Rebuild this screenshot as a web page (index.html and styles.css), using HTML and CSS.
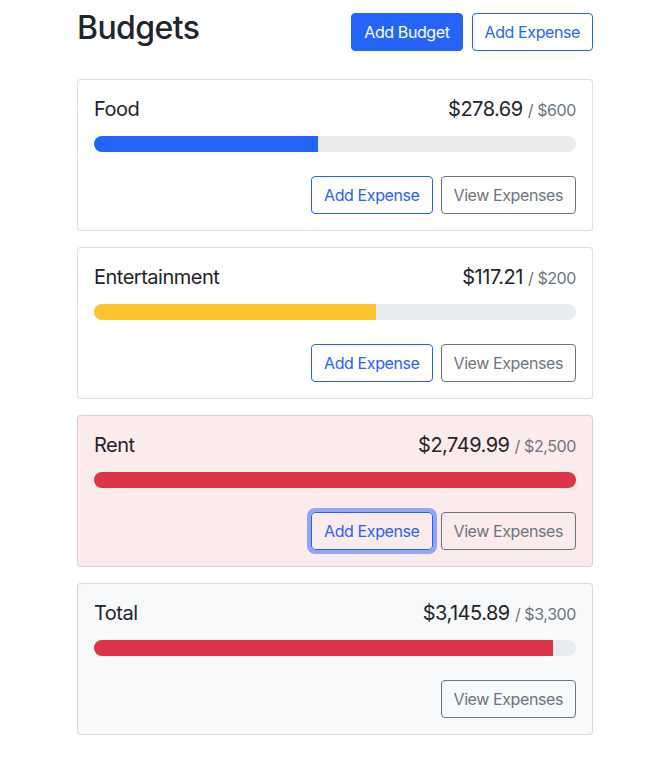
FILE: index.html
```html
<!DOCTYPE html>
<html lang="en">
<head>
<meta charset="utf-8">
<title>Budgets</title>
<link rel="stylesheet" href="styles.css">
</head>
<body>
<div class="container">
  <div class="header">
    <h1 class="page-title">Budgets</h1>
    <button class="btn btn-primary">Add Budget</button>
    <button class="btn btn-outline-primary">Add Expense</button>
  </div>
  <div class="cards">
    <div class="card">
      <div class="card-title">
        <div>Food</div>
        <div class="amount">$278.69 <span class="max">/ $600</span></div>
      </div>
      <div class="progress"><div class="bar bar-primary" style="width:46.45%"></div></div>
      <div class="actions">
        <button class="btn btn-outline-primary">Add Expense</button>
        <button class="btn btn-outline-secondary">View Expenses</button>
      </div>
    </div>
    <div class="card">
      <div class="card-title">
        <div>Entertainment</div>
        <div class="amount">$117.21 <span class="max">/ $200</span></div>
      </div>
      <div class="progress"><div class="bar bar-warning" style="width:58.6%"></div></div>
      <div class="actions">
        <button class="btn btn-outline-primary">Add Expense</button>
        <button class="btn btn-outline-secondary">View Expenses</button>
      </div>
    </div>
    <div class="card card-danger">
      <div class="card-title">
        <div>Rent</div>
        <div class="amount">$2,749.99 <span class="max">/ $2,500</span></div>
      </div>
      <div class="progress"><div class="bar bar-danger" style="width:100%"></div></div>
      <div class="actions">
        <button class="btn btn-outline-primary focused">Add Expense</button>
        <button class="btn btn-outline-secondary">View Expenses</button>
      </div>
    </div>
    <div class="card card-light">
      <div class="card-title">
        <div>Total</div>
        <div class="amount">$3,145.89 <span class="max">/ $3,300</span></div>
      </div>
      <div class="progress"><div class="bar bar-danger" style="width:95.33%"></div></div>
      <div class="actions">
        <button class="btn btn-outline-secondary">View Expenses</button>
      </div>
    </div>
  </div>
</div>
</body>
</html>
```

FILE: styles.css
```css
* { box-sizing: border-box; }
body {
  margin: 0;
  font-family: Inter, "Noto Sans", "Liberation Sans", sans-serif;
  color: #212529;
  background: #fff;
  font-size: 16px;
  line-height: 1.5;
  letter-spacing: -0.4px;
}
.container {
  width: 516px;
  margin-left: 77px;
  padding-top: 9px;
}
.header {
  display: flex;
  align-items: center;
  gap: 9px;
  margin-bottom: 24px;
}
.page-title {
  margin: 0 auto 8px 0;
  font-size: 32px;
  font-weight: 500;
  line-height: 1.2;
  letter-spacing: -0.6px;
}
.btn {
  font-family: inherit;
  font-size: 16px;
  line-height: 24px;
  letter-spacing: -0.4px;
  padding: 6px 12px;
  border-radius: 4px;
  border: 1px solid transparent;
  background: transparent;
  cursor: pointer;
}
.btn-primary { background: #2664f9; border-color: #2664f9; color: #fff; }
.btn-outline-primary { border-color: #2664f9; color: #2664f9; }
.btn-outline-secondary { border-color: #6c757d; color: #6c757d; }
.focused { box-shadow: 0 0 0 4px rgba(38, 100, 249, 0.5); }
.cards {
  display: flex;
  flex-direction: column;
  gap: 16px;
}
.card {
  border: 1px solid rgba(0, 0, 0, 0.125);
  border-radius: 4px;
  padding: 16px;
  background: #fff;
}
.card-danger { background: #fcebec; }
.card-light { background: #f8f9fa; }
.card-title {
  display: flex;
  justify-content: space-between;
  align-items: baseline;
  font-size: 20px;
  line-height: 1.2;
  letter-spacing: -0.5px;
  padding-top: 1px;
  height: 24px;
  margin-bottom: 16px;
}
.max {
  font-size: 16px;
  color: #6c757d;
  letter-spacing: -0.4px;
}
.progress {
  height: 16px;
  border-radius: 8px;
  background: #e9ecef;
  overflow: hidden;
  display: flex;
}
.bar { height: 100%; }
.bar-primary { background: #2664f9; }
.bar-warning { background: #ffc22f; }
.bar-danger { background: #dc3448; }
.actions {
  display: flex;
  justify-content: flex-end;
  gap: 8px;
  margin-top: 24px;
}
```
